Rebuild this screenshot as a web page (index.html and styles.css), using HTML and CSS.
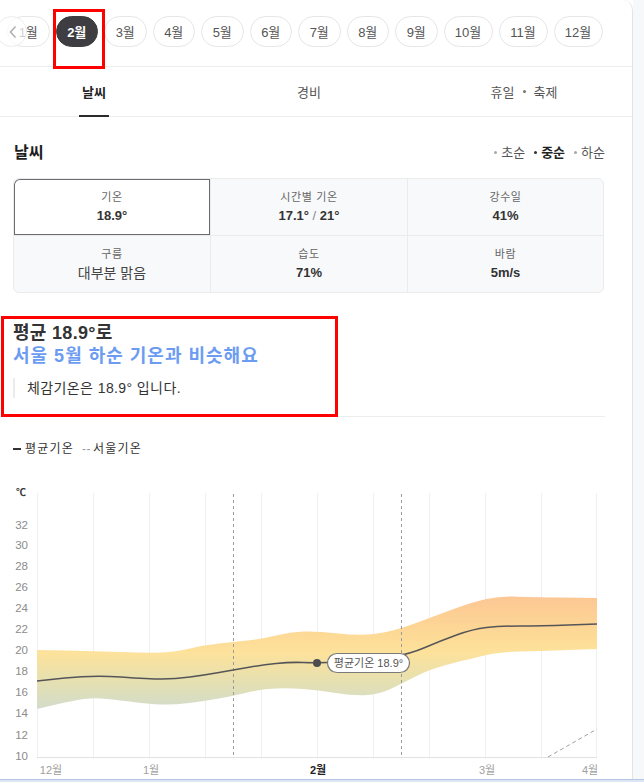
FILE: index.html
```html
<!DOCTYPE html>
<html lang="ko">
<head>
<meta charset="utf-8">
<link rel="stylesheet" href="styles.css">
</head>
<body>
<div class="page">
  <div class="card">
    <div class="months">
      <span class="pill">1월</span>
      <span class="pill active">2월</span>
      <span class="pill">3월</span>
      <span class="pill">4월</span>
      <span class="pill">5월</span>
      <span class="pill">6월</span>
      <span class="pill">7월</span>
      <span class="pill">8월</span>
      <span class="pill">9월</span>
      <span class="pill wide">10월</span>
      <span class="pill wide">11월</span>
      <span class="pill wide">12월</span>
      <span class="prev"><svg width="10" height="14" viewBox="0 0 10 14"><path d="M7.5 1.5 L2.5 7 L7.5 12.5" fill="none" stroke="#b0b0b0" stroke-width="1.6"/></svg></span>
    </div>
    <div class="tabs">
      <div class="tab"><span class="tab-label on">날씨</span></div>
      <div class="tab"><span class="tab-label">경비</span></div>
      <div class="tab"><span class="tab-label">휴일<i class="tdot"></i>축제</span></div>
    </div>
    <div class="content">
      <div class="sec-head">
        <h2 class="sec-title">날씨</h2>
        <div class="periods">
          <span class="period"><i class="pdot"></i>초순</span>
          <span class="period cur"><i class="pdot"></i>중순</span>
          <span class="period"><i class="pdot"></i>하순</span>
        </div>
      </div>
      <div class="stats">
        <div class="cell sel"><div class="lbl">기온</div><div class="val">18.9°</div></div>
        <div class="cell"><div class="lbl">시간별 기온</div><div class="val">17.1° <span class="slash">/</span> 21°</div></div>
        <div class="cell last"><div class="lbl">강수일</div><div class="val">41%</div></div>
        <div class="cell bot"><div class="lbl">구름</div><div class="val plain">대부분 맑음</div></div>
        <div class="cell bot"><div class="lbl">습도</div><div class="val">71%</div></div>
        <div class="cell bot last"><div class="lbl">바람</div><div class="val">5m/s</div></div>
      </div>
      <div class="summary">
        <h3 class="sum-title">평균 18.9°로</h3>
        <h3 class="sum-title blue">서울 5월 하순 기온과 비슷해요</h3>
        <p class="note">체감기온은 18.9° 입니다.</p>
      </div>
      <div class="legend">
        <span class="lg-solid"></span><span class="lg-text">평균기온</span>
        <span class="lg-dash">--</span><span class="lg-text">서울기온</span>
      </div>
    </div>
    <svg class="chart" width="632" height="312" viewBox="0 470 632 312">
      <defs>
        <linearGradient id="band" gradientUnits="userSpaceOnUse" x1="0" y1="597" x2="0" y2="710">
          <stop offset="0" stop-color="#fcc694"/>
          <stop offset="0.3" stop-color="#fdd795"/>
          <stop offset="0.5" stop-color="#fde29b"/>
          <stop offset="0.75" stop-color="#e6e0b0"/>
          <stop offset="1" stop-color="#d2dccb"/>
        </linearGradient>
      </defs>
      <g stroke="#f0f0f0" stroke-width="1">
        <line x1="37.5" y1="494" x2="37.5" y2="758"/>
        <line x1="93.5" y1="494" x2="93.5" y2="758"/>
        <line x1="149.5" y1="494" x2="149.5" y2="758"/>
        <line x1="205.5" y1="494" x2="205.5" y2="758"/>
        <line x1="261.5" y1="494" x2="261.5" y2="758"/>
        <line x1="317.5" y1="494" x2="317.5" y2="758"/>
        <line x1="373.5" y1="494" x2="373.5" y2="758"/>
        <line x1="429.5" y1="494" x2="429.5" y2="758"/>
        <line x1="485.5" y1="494" x2="485.5" y2="758"/>
        <line x1="541.5" y1="494" x2="541.5" y2="758"/>
        <line x1="596.5" y1="494" x2="596.5" y2="758"/>
      </g>
      <line x1="37" y1="758.5" x2="597" y2="758.5" stroke="#e2e2e2"/>
      <path fill="url(#band)" d="M37,651 L65,651.5 Q93,652 121,653 Q149,654 162,653.5 Q175,653 190,649.5 Q205,646 219,644.5 Q233,643 247.5,641.5 Q262,640 276,636.5 Q290,633 303.5,632.5 Q317,632 338.5,634.5 Q360,637 377.5,634.5 Q395,632 417.5,623.5 Q440,615 456.5,609 Q473,603 486.5,600 Q500,597 513.5,597.5 Q527,598 562,598.5 L597,599 L597,650 L568.5,651 Q540,652 520,652.5 Q500,653 486.5,656 Q473,659 451.5,664.5 Q430,670 415.5,677.5 Q401,685 390.5,690 Q380,695 367.5,696 Q355,697 336,694 Q317,691 303.5,690 Q290,689 276,689.5 Q262,690 247.5,693.5 Q233,697 219,699.5 Q205,702 189,704 Q173,706 161,705.5 Q149,705 129.5,702.5 Q110,700 101.5,699.5 Q93,699 84,700 Q75,701 56,705.5 L37,710 Z"/>
      <g stroke="#9a9a9a" stroke-width="1" stroke-dasharray="3 3">
        <line x1="233.5" y1="495" x2="233.5" y2="758"/>
        <line x1="401.5" y1="495" x2="401.5" y2="758"/>
      </g>
      <line x1="548" y1="758" x2="597" y2="730" stroke="#a0a0a0" stroke-width="1" stroke-dasharray="4 3"/>
      <path fill="none" stroke="#555558" stroke-width="1.5" d="M37,682 L65,679 Q93,676 121,678 Q149,680 162,680 Q175,680 190,678 Q205,676 219,673.5 Q233,671 247.5,668.5 Q262,666 276,664.5 Q290,663 303.5,663.5 Q317,664 343.5,663 Q370,662 390,658.5 Q410,655 425,648.5 Q440,642 456.5,636 Q473,630 486.5,628.5 Q500,627 520,627 Q540,627 568.5,626 L597,625"/>
      <circle cx="317" cy="664" r="4" fill="#4d4d50"/>
      <rect x="327.5" y="654.5" width="82" height="19" rx="9.5" fill="#fff" stroke="#7a7a7a" stroke-width="1.2"/>
      <text class="tip" x="368.5" y="668" text-anchor="middle">평균기온 18.9°</text>
      <text class="unit" x="16" y="497">℃</text>
      <g class="ylbl" text-anchor="end">
        <text x="28" y="530">32</text>
        <text x="28" y="550">30</text>
        <text x="28" y="571">28</text>
        <text x="28" y="592">26</text>
        <text x="28" y="613">24</text>
        <text x="28" y="634">22</text>
        <text x="28" y="655">20</text>
        <text x="28" y="676">18</text>
        <text x="28" y="697">16</text>
        <text x="28" y="718">14</text>
        <text x="28" y="740">12</text>
        <text x="28" y="761">10</text>
      </g>
      <g class="xlbl" text-anchor="middle">
        <text x="51" y="775">12월</text>
        <text x="151" y="775">1월</text>
        <text class="xcur" x="318" y="775">2월</text>
        <text x="487" y="775">3월</text>
        <text x="590" y="775">4월</text>
      </g>
    </svg>
    <div class="mark mark-month"></div>
    <div class="mark mark-summary"></div>
  </div>
  <div class="side"></div>
</div>
<div class="bottom-bar"></div>
</body>
</html>
```
FILE: styles.css
```css
* { box-sizing: border-box; }
html, body {
  margin: 0;
  padding: 0;
  height: 782px;
  overflow: hidden;
  background: #fff;
  font-family: "Liberation Sans", "Noto Sans CJK KR", sans-serif;
  color: #333;
}
.page {
  display: flex;
  height: 782px;
}
.card {
  position: relative;
  width: 633px;
  flex: none;
  border-right: 1px solid #e4e4e6;
  border-top-right-radius: 10px;
  background: #fff;
  overflow: hidden;
}
.side {
  flex: 1;
  background: #f7f8fa;
}
.months {
  position: relative;
  height: 67px;
  border-bottom: 1px solid #ededed;
  padding: 16px 0 0 7px;
  display: flex;
  gap: 6px;
  align-items: flex-start;
}
.pill {
  flex: none;
  width: 42.5px;
  height: 31px;
  border: 1px solid #e6e6e6;
  border-radius: 16px;
  display: flex;
  align-items: center;
  justify-content: center;
  font-size: 13px;
  color: #555;
  background: #fff;
}
.pill.wide { width: 49px; }
.pill.active {
  background: #3e3e42;
  border-color: #3e3e42;
  color: #fff;
  font-weight: bold;
}
.prev {
  position: absolute;
  left: -4px;
  top: 16px;
  width: 31px;
  height: 31px;
  border-radius: 50%;
  border: 1px solid #ececec;
  background: rgba(255, 255, 255, 0.72);
  display: flex;
  align-items: center;
  justify-content: center;
  padding-left: 2px;
}
.tabs {
  display: grid;
  grid-template-columns: 188px 242px 188px;
  height: 50px;
  border-bottom: 1px solid #ededed;
}
.tab {
  display: flex;
  justify-content: center;
  align-items: stretch;
}
.tab-label {
  display: flex;
  align-items: center;
  padding: 0 3.5px;
  font-size: 13px;
  color: #555;
  border-bottom: 2px solid transparent;
  margin-bottom: -1px;
}
.tab-label.on {
  color: #222;
  font-weight: bold;
  border-bottom-color: #2a2a2a;
}
.tdot {
  width: 3px;
  height: 3px;
  border-radius: 50%;
  background: #777;
  margin: 0 8px;
}
.content {
  padding: 0 28px 0 13px;
}
.sec-head {
  margin-top: 26px;
  height: 19px;
  display: flex;
  justify-content: space-between;
  align-items: center;
}
.sec-title {
  margin: 0 0 0 1px;
  font-size: 16px;
  line-height: 19px;
  font-weight: bold;
  color: #1e1e1e;
}
.periods {
  display: flex;
  gap: 9px;
  font-size: 13px;
  line-height: 19px;
  margin-right: -1px;
}
.period {
  display: flex;
  align-items: center;
  color: #555;
}
.pdot {
  width: 3px;
  height: 3px;
  border-radius: 50%;
  background: #a8a8a8;
  margin-right: 4px;
}
.period.cur { color: #222; font-weight: bold; }
.period.cur .pdot { background: #333; }
.stats {
  margin-top: 16px;
  display: grid;
  grid-template-columns: 197px 197px 1fr;
  border: 1px solid #ebebeb;
  border-radius: 6px;
  background: #f8f9fb;
  overflow: hidden;
}
.cell {
  height: 57px;
  padding-top: 10px;
  text-align: center;
  border-right: 1px solid #ebebeb;
  border-bottom: 1px solid #ebebeb;
}
.cell.last { border-right: none; }
.cell.bot { border-bottom: none; height: 56px; }
.cell.sel {
  background: #fff;
  box-shadow: inset 0 0 0 1px #6a6a70;
  border-top-left-radius: 6px;
}
.lbl {
  font-size: 11px;
  line-height: 16px;
  color: #666;
  letter-spacing: 0.6px;
}
.val {
  font-size: 13px;
  line-height: 22px;
  font-weight: bold;
  color: #333;
}
.val.plain {
  font-size: 14px;
  font-weight: normal;
  color: #444;
}
.slash { color: #888; font-weight: normal; }
.summary {
  margin-top: 29px;
  padding-bottom: 18px;
  border-bottom: 1px solid #eeeeee;
  margin-right: -1px;
}
.sum-title {
  margin: 0;
  font-size: 18px;
  line-height: 23px;
  font-weight: bold;
  color: #333;
  letter-spacing: 0.3px;
}
.sum-title.blue { color: #6c9cf2; letter-spacing: 1px; }
.note {
  margin: 10px 0 0 0;
  height: 20px;
  border-left: 2px solid #ebebeb;
  padding-left: 12px;
  font-size: 14px;
  line-height: 20px;
  color: #333;
  letter-spacing: 0.4px;
}
.legend {
  margin-top: 23px;
  height: 18px;
  display: flex;
  align-items: center;
  font-size: 12px;
  color: #333;
}
.lg-solid {
  width: 8px;
  height: 2px;
  background: #333;
  margin-right: 4px;
}
.lg-text { line-height: 18px; letter-spacing: 1.2px; }
.lg-dash {
  color: #999;
  margin: 0 2px 0 8px;
  letter-spacing: 0.5px;
}
.chart {
  display: block;
  margin-top: 11px;
}
.tip { font-size: 11px; fill: #555; }
.unit { font-size: 10px; font-weight: bold; fill: #333; }
.ylbl { font-size: 11.5px; fill: #8c8c8c; }
.xlbl { font-size: 11px; fill: #a0a0a0; }
.xlbl .xcur { fill: #222; font-weight: bold; }
.mark {
  position: absolute;
  border: 3px solid #ff0000;
}
.mark-month {
  left: 53px;
  top: 9px;
  width: 52px;
  height: 60px;
}
.mark-summary {
  left: 1px;
  top: 316px;
  width: 337px;
  height: 101px;
}
.bottom-bar {
  position: fixed;
  left: 0;
  right: 0;
  bottom: 0;
  height: 3px;
  background: #dde6f4;
  border-top: 1px solid #b9c8e2;
}
```
